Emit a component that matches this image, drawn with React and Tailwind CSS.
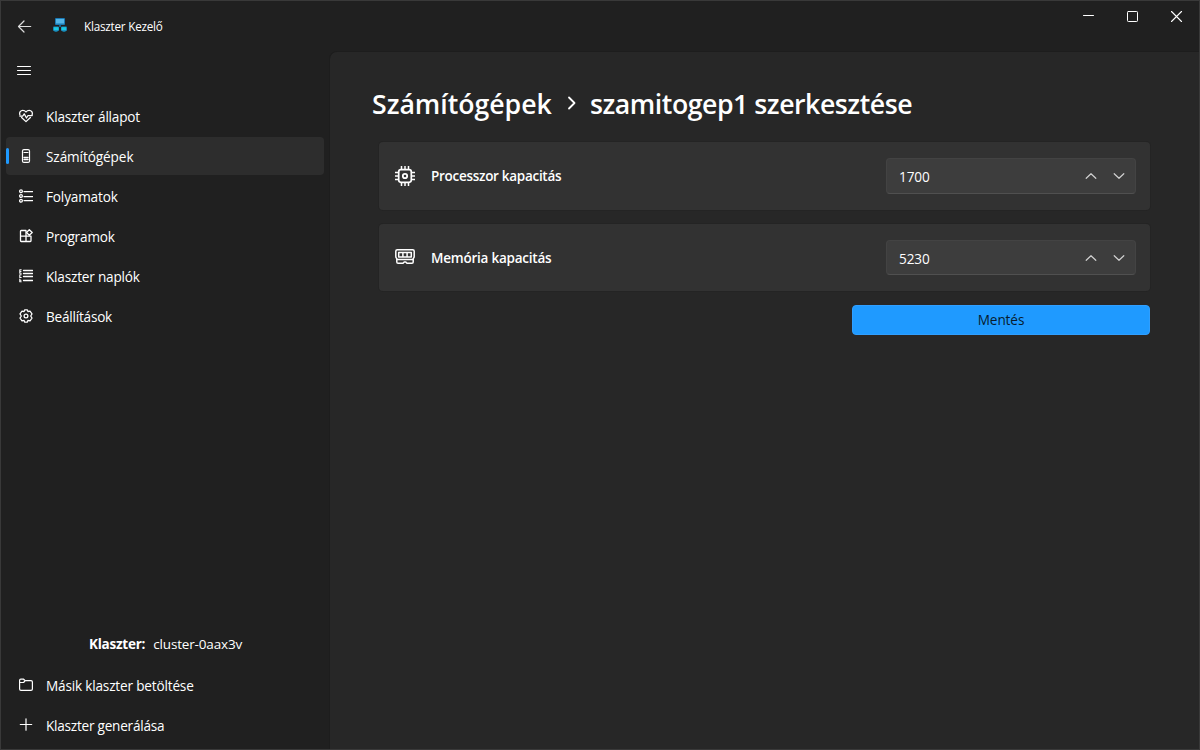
import React from "react";

function Icon({ size = 14, children, sw = 1.25, className = "" }) {
  return (
    <svg width={size} height={size} viewBox={`0 0 ${size} ${size}`} fill="none" stroke="currentColor" strokeWidth={sw} strokeLinecap="round" strokeLinejoin="round" className={`shrink-0 ${className}`}>
      {children}
    </svg>
  );
}

const HeartPulse = () => (
  <Icon>
    <path d="M1 6C-.1 3.400 1.700 1.300 3.800 1.300 5.300 1.300 6.300 2 7 3 7.700 2 8.700 1.300 10.200 1.300 12.300 1.300 14.100 3.400 13 6M2.600 8.500 7 12.600 11.400 8.500" />
    <path d="M.8 7H3.800L5.200 4.800 7.500 9 9 6.500H13.200" />
  </Icon>
);

const Server = () => (
  <Icon sw={1.2}>
    <rect x="3.500" y=".6" width="7" height="12.800" rx="1.500" />
    <path d="M5 3.500H9" />
    <path d="M5 8.500H9M5 10.500H9" strokeWidth="1.400" />
  </Icon>
);

const ListCircles = () => (
  <Icon>
    <circle cx="2" cy="2.200" r="1.400" />
    <circle cx="2" cy="7" r="1.400" />
    <circle cx="2" cy="11.800" r="1.400" />
    <path d="M5 2.500H13.500M5 7.500H13.500M5 11.500H13.500" />
  </Icon>
);

const Apps = () => (
  <Icon sw={1.300}>
    <path d="M7 1.500H2.200Q1.500 1.500 1.500 2.200V11.800Q1.500 12.500 2.200 12.500H11.300Q12 12.500 12 11.800V7.200H1.500M7 1.500V12.500" />
    <path d="M10.300.7 13.200 3.500 10.300 6.300 7.500 3.500Z" />
  </Icon>
);

const ListNumbers = () => (
  <Icon sw={1.100}>
    <path d="M2.200.8H.8V4.200H2.200M.8 2.500H2M2.200 5.800H.8V8.500H2.200M.8 10V12.800H2.200M.8 11.300H2" />
    <path d="M4.500 1.500H13.500M4.500 4.500H13.500M4.500 7.500H13.500M4.500 11.500H13.500" strokeWidth="1.300" />
  </Icon>
);

const Gear = () => (
  <Icon>
    <path d="M5.600.8H8.400L8.900 2.700 11 2.100 13 4.900 11.700 7 13 9.100 11 11.900 8.900 11.300 8.400 13.200H5.600L5.100 11.300 3 11.900 1 9.100 2.300 7 1 4.900 3 2.100 5.100 2.700Z" />
    <circle cx="7" cy="7" r="1.900" />
  </Icon>
);

const Folder = () => (
  <Icon sw={1.200}>
    <path d="M.6 2.400Q.6 1.200 1.800 1.200H4.600L6.200 2.700H12Q13.400 2.700 13.400 4.100V11Q13.400 12.400 12 12.400H2Q.6 12.400.6 11ZM.8 4.500H4.600L6.200 2.700" />
  </Icon>
);

const Plus = () => (
  <Icon sw={1.200}>
    <path d="M7 .8V12.200M1.300 6.500H12.700" />
  </Icon>
);

const nav = [
  { label: "Klaszter állapot", Glyph: HeartPulse, font: "tracking-[-0.19px]" },
  { label: "Számítógépek", Glyph: Server, font: "tracking-[-0.09px]", active: true },
  { label: "Folyamatok", Glyph: ListCircles, font: "tracking-[-0.16px]" },
  { label: "Programok", Glyph: Apps, font: "tracking-[-0.17px]" },
  { label: "Klaszter naplók", Glyph: ListNumbers, font: "tracking-[-0.2px]" },
  { label: "Beállítások", Glyph: Gear, font: "tracking-[-0.22px]" },
];

const footer = [
  { label: "Másik klaszter betöltése", Glyph: Folder, font: "tracking-[-0.18px]" },
  { label: "Klaszter generálása", Glyph: Plus, font: "tracking-[-0.24px]" },
];

function NavItem({ label, Glyph, font, active }) {
  return (
    <button className={`relative flex h-[38px] w-[318px] items-center rounded-[4px] pl-[13px] text-left ${active ? "bg-[#2d2d2d]" : ""}`}>
      {active && <span className="absolute left-0 top-[11px] h-4 w-[3px] rounded-full bg-[#1f9aff]" />}
      <Glyph />
      <span className={`ml-[13px] mt-px whitespace-nowrap text-[13.600px] leading-5 ${font}`}>{label}</span>
    </button>
  );
}

const Cpu = () => (
  <Icon size={20} sw={1.500}>
    <rect x="3.700" y="3.700" width="12.600" height="12.600" rx="2.200" strokeWidth="1.700" />
    <circle cx="10" cy="10" r="2.200" strokeWidth="1.800" />
    <path strokeLinecap="butt" d="M6.500 0V3.500M10 0V3.500M13.500 0V3.500M6.500 16.500V20M10 16.500V20M13.500 16.500V20M0 6.500H3.500M0 10H3.500M0 13.500H3.500M16.500 6.500H20M16.500 10H20M16.500 13.500H20" />
  </Icon>
);

const Memory = () => (
  <Icon size={20} sw={1.500} className="-mt-[2px]">
    <path d="M2.300 2.700H17.700Q19.200 2.700 19.200 4.200V9.500Q19.200 10.700 18.200 11.500V15Q18.200 16.300 16.900 16.300H12L10.800 15H9.200L8 16.300H3.100Q1.800 16.300 1.800 15V11.500Q.8 10.700.8 9.500V4.200Q.8 2.700 2.300 2.700ZM2 12.500H18" />
    <path d="M3.700 5.500H16.300V10H3.700ZM7.900 5.500V10M12.100 5.500V10" />
  </Icon>
);

function SettingCard({ label, value, Glyph, height, field, font }) {
  return (
    <section className={`flex items-center rounded-[4px] bg-[#323232] pl-4 pr-[14px] shadow-[0_0_0_1px_#242424] ${height}`}>
      <Glyph />
      <span className={`ml-4 text-[13.500px] font-semibold leading-5 ${font}`}>{label}</span>
      <div className={`ml-auto flex w-[250px] items-center rounded-[4px] border border-[#434343] border-b-[#505050] bg-[#3d3d3d] pl-3 pr-[10px] ${field}`}>
        <span className="mt-[2px] text-[13.600px] leading-5 tracking-[-0.1px]">{value}</span>
        <div className="ml-auto flex gap-4 text-[#d0d0d0]">
          <Icon size={12} sw={1.200}><path d="M1.200 8.300 6 3.700 10.800 8.300" /></Icon>
          <Icon size={12} sw={1.200}><path d="M1.200 3.700 6 8.300 10.800 3.700" /></Icon>
        </div>
      </div>
    </section>
  );
}

function AppLogo() {
  return (
    <svg width="14" height="15" viewBox="0 0 14 15" className="ml-[21px]">
      <rect x="2" y="0" width="10" height="7" rx="1" fill="#1979b5" />
      <rect x="3" y="1" width="8" height="4.500" fill="#54b5e6" />
      <path d="M6 7H8V9H6Z" fill="#176089" />
      <rect x="0" y="8.500" width="6" height="4.500" rx="1" fill="#1b86b8" />
      <rect x="1" y="9.200" width="4.500" height="3" fill="#19c9e2" />
      <rect x="8" y="8.500" width="6" height="4.500" rx="1" fill="#1b86b8" />
      <rect x="8.500" y="9.200" width="4.500" height="3" fill="#19c9e2" />
      <path d="M1.500 13H4.500V14H1.500ZM9.500 13H12.500V14H9.500Z" fill="#176e91" />
    </svg>
  );
}

export default function App() {
  return (
    <div className="flex h-[750px] w-[1200px] flex-col overflow-hidden border border-[#393939] bg-[#202020] font-['Open_Sans','Noto_Sans',sans-serif] text-white">
      <header className="flex h-[50px] shrink-0 items-start">
        <div className="flex h-[49px] items-center pl-4">
          <Icon size={15} sw={1.200} className="mt-px"><path d="M7 2 1.500 7.500 7 13M1.500 7.500H13.700" stroke="#dddddd" /></Icon>
          <AppLogo />
          <h1 className="ml-[17px] text-[11.700px] leading-4 tracking-[-0.22px]">Klaszter Kezelő</h1>
        </div>
        <div className="ml-auto flex gap-[32px] pr-[16px] pt-[10px]">
          <Icon size={12} sw={1}><path d="M.5 4.500H10.500" /></Icon>
          <Icon size={12} sw={1}><rect x=".5" y=".5" width="10" height="10" rx=".8" /></Icon>
          <Icon size={12} sw={1.100}><path d="M.5.5 10.500 10.500M10.500.5.500 10.500" /></Icon>
        </div>
      </header>
      <div className="flex min-h-0 flex-1">
        <aside className="flex w-[328px] shrink-0 flex-col pl-[5px]">
          <div className="flex h-[38px] items-center pl-[11px]">
            <Icon size={14} sw={1}><path d="M.5 3.500H13.500M.5 7.500H13.500M.5 11.500H13.500" /></Icon>
          </div>
          <nav className="flex flex-col gap-[2px] pt-2">
            {nav.map((item) => <NavItem key={item.label} {...item} />)}
          </nav>
          <div className="mt-auto pb-[5px]">
            <p className="mb-[12px] flex pl-[83px] text-[13.500px] leading-5">
              <span className="font-bold tracking-[-0.24px]">Klaszter:</span>
              <span className="ml-2 tracking-[-0.16px]">cluster-0aax3v</span>
            </p>
            <div className="flex flex-col gap-[2px]">
              {footer.map((item) => <NavItem key={item.label} {...item} />)}
            </div>
          </div>
        </aside>
        <main className="flex-1 rounded-tl-lg border-l border-t border-[#1d1d1d] bg-[#272727] pl-[42px] pr-[49px] pt-[32px]">
          <h2 className="flex h-10 items-center whitespace-nowrap text-[26.700px] font-semibold leading-10">
            <span className="w-[180px] tracking-[-0.03px]">Számítógépek</span>
            <Icon size={16} sw={1.800} className="ml-[12px] mr-[10px] -mt-[3px]"><path d="M5 2.500 10.500 8 5 13.500" /></Icon>
            <span className="tracking-[-0.470px]">szamitogep1 szerkesztése</span>
          </h2>
          <div className="ml-[7px] mt-[18px] flex flex-col gap-[14px]">
            <SettingCard label="Processzor kapacitás" value="1700" Glyph={Cpu} height="h-[68px]" field="h-9" font="tracking-[-0.290px]" />
            <SettingCard label="Memória kapacitás" value="5230" Glyph={Memory} height="h-[67px]" field="h-[35px]" font="tracking-[-0.230px]" />
            <button className="h-[30px] w-[298px] self-end rounded-[4px] border border-[#309fff] bg-[#1f9aff] text-[13.600px] leading-5 tracking-[-0.1px] text-[#071c2e]">Mentés</button>
          </div>
        </main>
      </div>
    </div>
  );
}
